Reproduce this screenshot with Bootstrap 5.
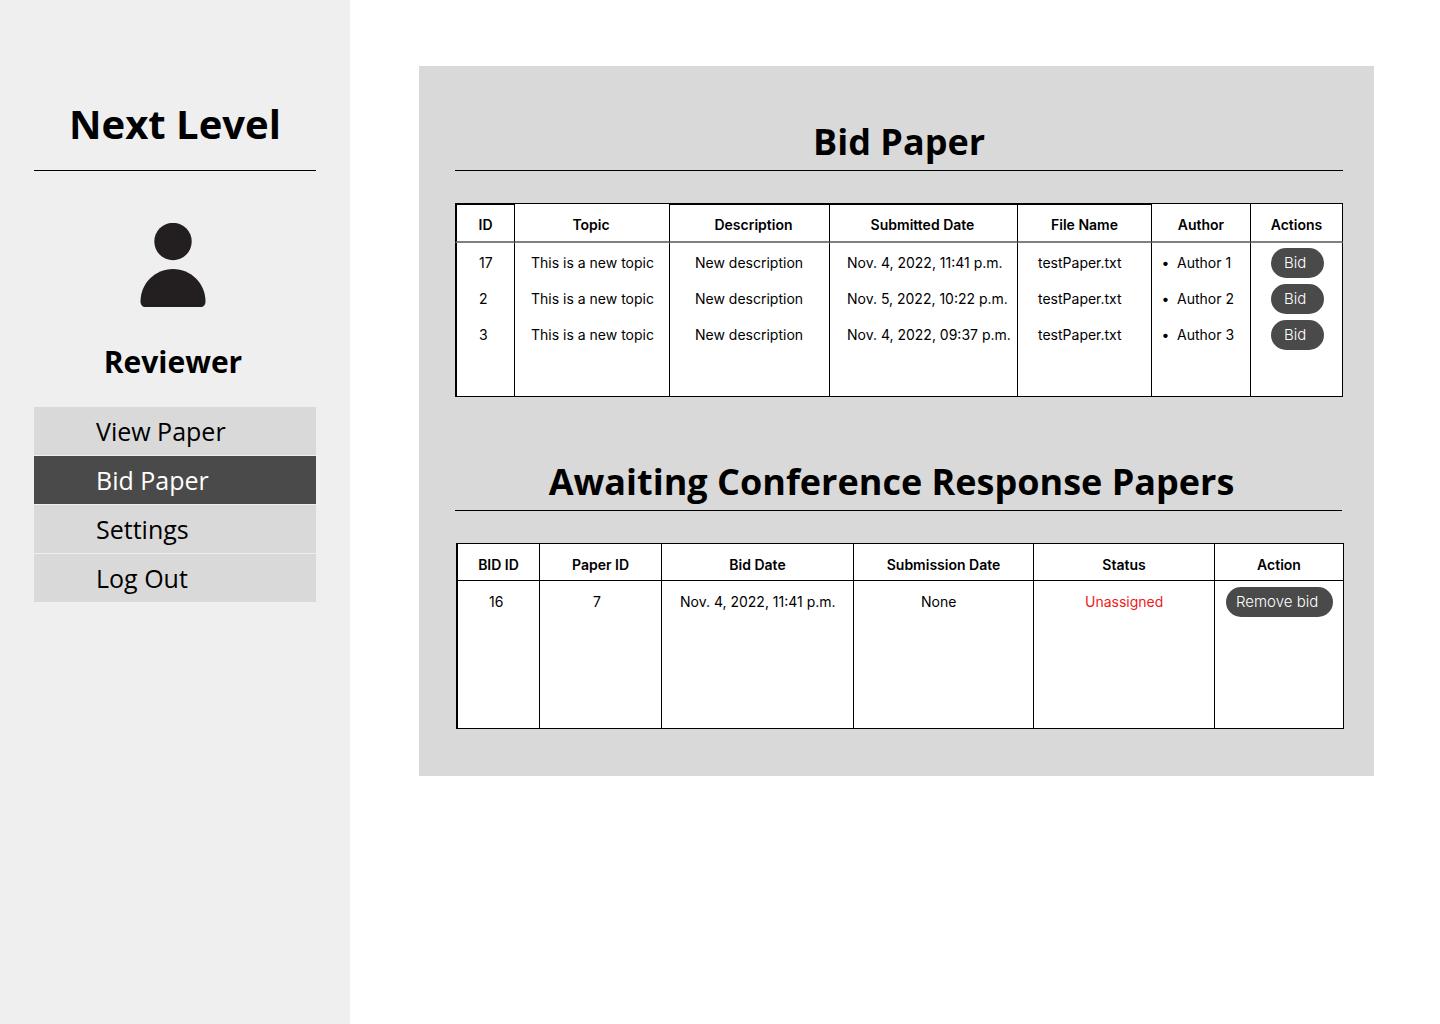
<!DOCTYPE html>
<html lang="en">
<head>
<meta charset="utf-8">
<meta name="viewport" content="width=device-width, initial-scale=1">
<title>Next Level – Bid Paper</title>
<link href="https://cdn.jsdelivr.net/npm/bootstrap@5.3.0/dist/css/bootstrap.min.css" rel="stylesheet">
<style>
  body { font-family: Inter, "Liberation Sans", sans-serif; color: #000; background: #fff; }
  h1, h2, .role-name, .side-link { font-family: "Open Sans", "Noto Sans", sans-serif; }
  h1, h2, .role-name { font-weight: 700; margin: 0; text-align: center; }

  .sidebar { width: 350px; padding: 96px 34px 32px; background: #efefef; }
  .sidebar h1 { font-size: 40px; line-height: 56px; }
  .rule { margin: 0; border: 0; border-top: 1px solid #000; opacity: 1; }
  .sidebar .rule { margin-top: 18px; }
  .profile { padding: 52px 4px 24px 0; }
  .role-name { font-size: 30px; line-height: 42px; margin-top: 34px; }
  .side-nav { gap: 1px; }
  .side-link { height: 48px; padding: 0 62px; font-size: 25px; line-height: 48px; color: #000; background: #d9d9d9; text-decoration: none; }
  .side-link:hover { background: #cfcfcf; color: #000; }
  .side-link.active { background: #4a4a4a; color: #fff; }

  main { padding: 66px 66px 66px 69px; min-width: 0; }
  .panel { background: #d9d9d9; padding: 50px 30px 47px 36px; }
  .panel h2 { font-size: 36px; line-height: 52px; padding-bottom: 2px; }
  .panel .rule { margin-bottom: 32px; }
  .bids { margin-bottom: 59px; padding-right: 1px; }
  .awaiting h2 { padding-right: 16px; }
  .awaiting .rule { margin-right: 2px; }
  .awaiting .table { margin-left: 1px; width: calc(100% - 1px); }

  .data-table { table-layout: fixed; border-collapse: separate; border-spacing: 0; margin: 0; background: #fff; font-size: 14px; line-height: 30px; color: #000; }
  .data-table th, .data-table td { border: 0 solid #000; border-right-width: 1px; padding: 0; background: #fff; color: #000; white-space: nowrap; }
  .data-table th:first-child, .data-table td:first-child { border-left-width: 2px; }
  .data-table th { padding: 5px 0 0; border-top-width: 1px; border-bottom: 2px solid #808080; font-weight: 600; text-align: center; vertical-align: top; line-height: 32px; }
  .data-table td { padding-top: 3px; padding-bottom: 3px; vertical-align: top; }
  .data-table tbody tr:first-child td { padding-top: 5px; }
  .data-table tbody tr:last-child td { padding-bottom: 46px; border-bottom-width: 1px; }
  .bids th:nth-child(3) { padding-left: 8px; }
  .bids th:nth-child(2), .bids th:nth-child(4) { padding-right: 2px; }
  .bids th.thick { border-top-width: 2px; padding-top: 4px; }
  .bids td:nth-child(1) { padding-left: 22px; }
  .bids td:nth-child(2) { padding-left: 16px; }
  .bids td:nth-child(3) { padding-left: 25px; }
  .bids td:nth-child(4) { padding-left: 17px; }
  .bids td:nth-child(5) { padding-left: 20px; }
  .bids td:nth-child(6) { padding-left: 25px; }
  .bids td:nth-child(7) { padding-left: 20px; }
  .awaiting .data-table th { line-height: 31px; border-bottom: 1px solid #000; }
  .awaiting .data-table tbody tr:first-child td { padding-top: 6px; padding-bottom: 111px; }
  .awaiting td:nth-child(1) { padding-left: 31px; }
  .awaiting td:nth-child(2) { padding-left: 53px; }
  .awaiting td:nth-child(3) { padding-left: 18px; }
  .awaiting td:nth-child(4) { padding-left: 67px; }
  .awaiting td:nth-child(5) { padding-left: 51px; }
  .awaiting td:nth-child(6) { padding-left: 11px; }
  .awaiting .data-table td.unassigned { color: #f01818; }
  .author-list { margin: 0; padding: 0; list-style-type: "•\00a0\00a0"; }

  .pill { display: block; width: 53px; height: 30px; padding: 0 0 0 13px; border: 0; border-radius: 15px; background: #4a4a4a; color: #fff; font-size: 15px; font-weight: 300; line-height: 30px; text-align: left; }
  .pill:hover { background: #333; color: #fff; }
  .pill-wide { width: 107px; padding-left: 10px; }
</style>
<script src="https://cdn.jsdelivr.net/npm/bootstrap@5.3.0/dist/js/bootstrap.bundle.min.js" defer></script>
</head>
<body>
<div class="d-flex min-vh-100">
  <aside class="sidebar flex-shrink-0">
    <h1>Next Level</h1>
    <hr class="rule">
    <div class="profile">
      <svg class="d-block mx-auto" width="66" height="84" viewBox="0 0 66 84" fill="#231f20" aria-hidden="true">
        <circle cx="33" cy="18.500" r="18.700"/>
        <path d="M33 46C51 46 65.500 60.500 65.500 78.500C65.500 82 63.500 84 60.500 84H5.500C2.500 84 .5 82 .5 78.500C.5 60.500 15 46 33 46Z"/>
      </svg>
      <p class="role-name">Reviewer</p>
    </div>
    <nav class="side-nav nav flex-column" aria-label="Main">
      <a class="side-link" href="#">View Paper</a>
      <a class="side-link active" href="#" aria-current="page">Bid Paper</a>
      <a class="side-link" href="#">Settings</a>
      <a class="side-link" href="#">Log Out</a>
    </nav>
  </aside>

  <main class="flex-grow-1">
    <div class="panel">
      <section class="bids">
        <h2>Bid Paper</h2>
        <hr class="rule">
        <table class="table data-table">
          <colgroup><col style="width:60px"><col style="width:155px"><col style="width:160px"><col style="width:188px"><col style="width:134px"><col style="width:99px"><col style="width:92px"></colgroup>
          <thead>
            <tr><th scope="col" class="thick">ID</th><th scope="col">Topic</th><th scope="col" class="thick">Description</th><th scope="col" class="thick">Submitted Date</th><th scope="col" class="thick">File Name</th><th scope="col">Author</th><th scope="col">Actions</th></tr>
          </thead>
          <tbody>
            <tr><td>17</td><td>This is a new topic</td><td>New description</td><td>Nov. 4, 2022, 11:41 p.m.</td><td>testPaper.txt</td><td><ul class="author-list"><li>Author 1</li></ul></td><td><button type="button" class="btn pill">Bid</button></td></tr>
            <tr><td>2</td><td>This is a new topic</td><td>New description</td><td>Nov. 5, 2022, 10:22 p.m.</td><td>testPaper.txt</td><td><ul class="author-list"><li>Author 2</li></ul></td><td><button type="button" class="btn pill">Bid</button></td></tr>
            <tr><td>3</td><td>This is a new topic</td><td>New description</td><td>Nov. 4, 2022, 09:37 p.m.</td><td>testPaper.txt</td><td><ul class="author-list"><li>Author 3</li></ul></td><td><button type="button" class="btn pill">Bid</button></td></tr>
          </tbody>
        </table>
      </section>

      <section class="awaiting">
        <h2>Awaiting Conference Response Papers</h2>
        <hr class="rule">
        <table class="table data-table">
          <colgroup><col style="width:84px"><col style="width:122px"><col style="width:192px"><col style="width:180px"><col style="width:181px"><col style="width:129px"></colgroup>
          <thead>
            <tr><th scope="col">BID ID</th><th scope="col">Paper ID</th><th scope="col">Bid Date</th><th scope="col">Submission Date</th><th scope="col">Status</th><th scope="col">Action</th></tr>
          </thead>
          <tbody>
            <tr><td>16</td><td>7</td><td>Nov. 4, 2022, 11:41 p.m.</td><td>None</td><td class="unassigned">Unassigned</td><td><button type="button" class="btn pill pill-wide">Remove bid</button></td></tr>
          </tbody>
        </table>
      </section>
    </div>
  </main>
</div>
</body>
</html>
